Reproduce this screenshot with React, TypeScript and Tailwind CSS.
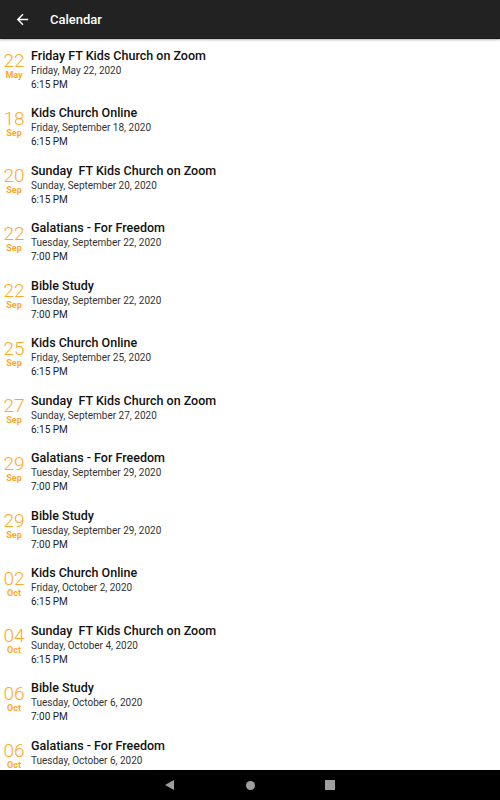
import React from "react";

type Ev = { d: string; m: string; title: string; date: string; time: string };

const events: Ev[] = [
  { d: "22", m: "May", title: "Friday FT Kids Church on Zoom", date: "Friday, May 22, 2020", time: "6:15 PM" },
  { d: "18", m: "Sep", title: "Kids Church Online", date: "Friday, September 18, 2020", time: "6:15 PM" },
  { d: "20", m: "Sep", title: "Sunday  FT Kids Church on Zoom", date: "Sunday, September 20, 2020", time: "6:15 PM" },
  { d: "22", m: "Sep", title: "Galatians - For Freedom", date: "Tuesday, September 22, 2020", time: "7:00 PM" },
  { d: "22", m: "Sep", title: "Bible Study", date: "Tuesday, September 22, 2020", time: "7:00 PM" },
  { d: "25", m: "Sep", title: "Kids Church Online", date: "Friday, September 25, 2020", time: "6:15 PM" },
  { d: "27", m: "Sep", title: "Sunday  FT Kids Church on Zoom", date: "Sunday, September 27, 2020", time: "6:15 PM" },
  { d: "29", m: "Sep", title: "Galatians - For Freedom", date: "Tuesday, September 29, 2020", time: "7:00 PM" },
  { d: "29", m: "Sep", title: "Bible Study", date: "Tuesday, September 29, 2020", time: "7:00 PM" },
  { d: "02", m: "Oct", title: "Kids Church Online", date: "Friday, October 2, 2020", time: "6:15 PM" },
  { d: "04", m: "Oct", title: "Sunday  FT Kids Church on Zoom", date: "Sunday, October 4, 2020", time: "6:15 PM" },
  { d: "06", m: "Oct", title: "Bible Study", date: "Tuesday, October 6, 2020", time: "7:00 PM" },
  { d: "06", m: "Oct", title: "Galatians - For Freedom", date: "Tuesday, October 6, 2020", time: "7:00 PM" },
];

export default function App() {
  return (
    <div
      className="w-[500px] h-[800px] flex flex-col bg-white overflow-hidden"
      style={{ fontFamily: "Roboto, 'Liberation Sans', sans-serif" }}
    >
      <div className="h-[39px] shrink-0 bg-[#222222] flex items-center border-b border-[#1a1a1a] relative z-10 shadow-[0_1px_2px_rgba(0,0,0,0.3)]">
        <svg width="17" height="17" viewBox="0 0 24 24" className="ml-[14px]">
          <path d="M20 11H7.83l5.59-5.59L12 4l-8 8 8 8 1.41-1.41L7.83 13H20v-2z" fill="#ffffff" />
        </svg>
        <span className="ml-[19px] text-white text-[13px] font-medium leading-none">Calendar</span>
      </div>
      <div className="flex-1 overflow-hidden">
        {events.map((e, i) => (
          <div key={i} className="h-[57.5px] flex">
            <div className="w-[28px] shrink-0 flex flex-col items-center pt-[13.4px] text-[#FFA726]">
              <span className="text-[19px] font-light leading-[17.8px]">{e.d}</span>
              <span className="text-[9px] font-bold leading-[10px]">{e.m}</span>
            </div>
            <div className="ml-[3px] flex flex-col pt-[7.5px]">
              <span className="text-[12.5px] font-medium leading-[17.4px] text-[#111111] whitespace-pre">{e.title}</span>
              <span className="text-[10px] leading-[14px] text-[#333333]">{e.date}</span>
              <span className="text-[10px] leading-[14px] text-[#222222]">{e.time}</span>
            </div>
          </div>
        ))}
      </div>
      <div className="h-[30px] shrink-0 bg-black flex items-center justify-center">
        <div className="relative w-full h-full">
          <svg className="absolute left-[165px] top-[10px]" width="10" height="10" viewBox="0 0 10 10">
            <path d="M9 0 L9 10 L0 5 Z" fill="#9e9e9e" />
          </svg>
          <div className="absolute left-[245.5px] top-[10.5px] w-[9px] h-[9px] rounded-full bg-[#9e9e9e]" />
          <div className="absolute left-[325px] top-[10px] w-[10px] h-[9.5px] bg-[#9e9e9e]" />
        </div>
      </div>
    </div>
  );
}
